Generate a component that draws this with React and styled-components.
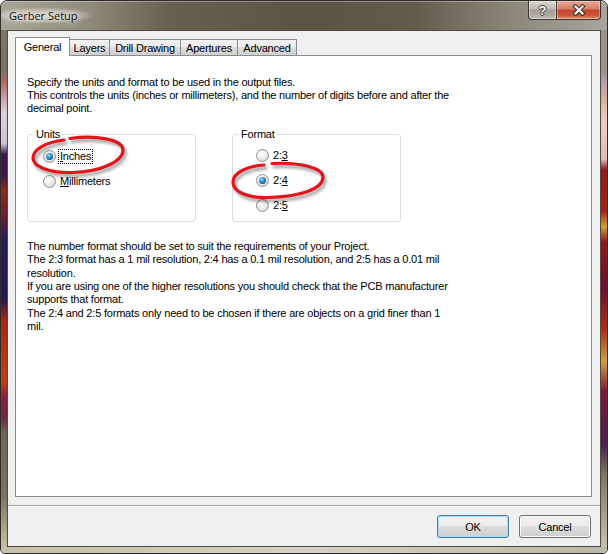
import React from 'react';
import styled, { createGlobalStyle, css } from 'styled-components';

const GlobalStyle = createGlobalStyle`
  html, body {
    margin: 0;
    padding: 0;
    background: #fff;
  }
  body {
    font-family: "Liberation Sans", Arial, sans-serif;
  }
`;

const leftGlass = `linear-gradient(180deg,
  #7b7566 0%, #7b7363 8%, #b36a66 10%, #c89aa4 13%, #dcd2e2 16%, #cfc0d6 22%,
  #3a1a4a 24%, #3a1848 28%, #8a2a1c 31%, #6a2030 36%, #2c1c5c 40%, #261850 52%,
  #a02a14 56%, #b84018 68%, #8a2040 71%, #6a2a40 75%, #6e6755 78%, #7a735f 90%, #c6bfa6 100%)`;

const rightGlass = `linear-gradient(180deg,
  #9a958b 0%, #9a958b 8%, #b89aa8 10%, #d8b8a0 14%, #ecd0c8 18%, #e2b8b4 25%,
  #8c1a1a 27%, #a02414 35%, #d0a030 38%, #8c1a1a 41%, #6a1030 50%, #a83018 58%,
  #d0a040 64%, #7a1838 70%, #4a2050 80%, #7b7563 86%, #c7c1ae 100%)`;

const Window = styled.div`
  position: relative;
  width: 608px;
  height: 554px;
  box-sizing: border-box;
  border: 1px solid #2f2d29;
  border-radius: 7px 7px 5px 5px;
  overflow: hidden;
  display: flex;
  flex-direction: column;
  background: #c8c2ae;
`;

const TitleBar = styled.div`
  height: 29px;
  flex: none;
  display: flex;
  align-items: flex-start;
  background: linear-gradient(90deg, #a9a497 0%, #928c7e 14%, #675f4f 28%, #5b5343 50%, #625b4c 68%, #8f897d 85%, #aaa59c 100%);
  box-shadow: inset 0 1px 0 rgba(255, 255, 255, 0.35);
`;

const Title = styled.div`
  margin-top: 7px;
  padding: 0 14px 0 8px;
  line-height: 15px;
  font-family: "Open Sans", "Noto Sans", sans-serif;
  font-size: 11px;
  color: #141414;
  background: radial-gradient(ellipse at 45% 50%, rgba(235, 232, 225, 0.75) 0%, rgba(235, 232, 225, 0.35) 55%, rgba(235, 232, 225, 0) 75%);
  text-shadow: 0 0 6px #fff, 0 0 10px rgba(255, 255, 255, 0.8);
`;

const CaptionButtons = styled.div`
  display: flex;
  margin-left: auto;
  margin-right: 6px;
`;

const CaptionButton = styled.div`
  height: 19px;
  box-sizing: border-box;
  display: flex;
  align-items: center;
  justify-content: center;
  border: 1px solid rgba(38, 34, 28, 0.85);
  border-top: none;
  box-shadow: inset 0 0 0 1px rgba(255, 255, 255, 0.35);
  ${p => p.$close ? css`
    width: 44px;
    border-left: none;
    border-radius: 0 0 4px 0;
    background: linear-gradient(180deg, #e9a695 0%, #d77d68 45%, #c3452d 50%, #cc5538 80%, #e39676 100%);
  ` : css`
    width: 29px;
    border-radius: 0 0 0 4px;
    background: linear-gradient(180deg, #dcd9d3 0%, #bdb9b1 45%, #a39e94 50%, #b3aea4 85%, #c9c5bd 100%);
  `}
`;

const HelpGlyph = styled.span`
  font-family: "Liberation Sans", Arial, sans-serif;
  font-weight: bold;
  font-size: 13px;
  line-height: 13px;
  color: #fff;
  text-shadow: 1px 0 0 #3a3a3a, -1px 0 0 #3a3a3a, 0 1px 0 #3a3a3a, 0 -1px 0 #3a3a3a;
`;

const Body = styled.div`
  flex: 1;
  display: flex;
  min-height: 0;
`;

const Side = styled.div`
  width: 6px;
  flex: none;
  background: ${p => p.$bg};
`;

const BottomEdge = styled.div`
  height: 6px;
  flex: none;
  background: linear-gradient(90deg, #c7c0a6 0%, #d6d1c2 50%, #bdb7a5 100%);
`;

const Client = styled.div`
  flex: 1;
  display: flex;
  flex-direction: column;
  background: #f0f0f0;
  border: 1px solid #4f4b43;
`;

const TabStrip = styled.div`
  display: flex;
  align-items: flex-end;
  height: 18px;
  padding: 6px 0 0 7px;
`;

const Tab = styled.div`
  position: relative;
  box-sizing: border-box;
  width: ${p => p.$width}px;
  height: ${p => (p.$active ? 19 : 16)}px;
  margin-bottom: ${p => (p.$active ? -1 : 0)}px;
  margin-left: -1px;
  z-index: ${p => (p.$active ? 1 : 0)};
  display: flex;
  align-items: center;
  justify-content: center;
  border: 1px solid #898c95;
  border-bottom: none;
  font-size: 11px;
  letter-spacing: -0.2px;
  color: #000;
  background: ${p => (p.$active ? '#fff' : 'linear-gradient(180deg, #f2f2f2 0%, #ebebeb 50%, #dddddd 50%, #cfcfcf 100%)')};
  padding-bottom: ${p => (p.$active ? 1 : 0)}px;

  &:first-child {
    margin-left: 0;
  }
`;

const Panel = styled.div`
  height: 442px;
  box-sizing: border-box;
  margin: 0 8px 0 7px;
  padding: 19.5px 0 0 11px;
  border: 1px solid #898c95;
  background: #fff;
`;

const Text = styled.div`
  font-size: 11px;
  letter-spacing: -0.2px;
  line-height: 13.4px;
  white-space: nowrap;
  color: #000;
  margin-top: ${p => p.$top || 0}px;
`;

const GroupRow = styled.div`
  display: flex;
  gap: 36px;
  margin-top: 18.5px;
`;

const GroupBox = styled.div`
  position: relative;
  width: 169px;
  height: 88px;
  box-sizing: border-box;
  border: 1px solid #d5dfe5;
  border-radius: 3px;
  padding: ${p => p.$padTop}px 0 0 ${p => p.$padLeft}px;
`;

const Legend = styled.span`
  position: absolute;
  top: -7px;
  left: 6px;
  padding: 0 2px;
  background: #fff;
  font-size: 11px;
  letter-spacing: -0.2px;
  line-height: 13px;
  color: #000;
`;

const RadioRow = styled.div`
  display: flex;
  align-items: center;
  gap: 2px;
  height: 25px;
`;

const Radio = styled.span`
  position: relative;
  flex: none;
  width: 13px;
  height: 13px;
  box-sizing: border-box;
  border-radius: 50%;
  border: 1px solid #8e8f8f;
  background: radial-gradient(circle at 40% 35%, #ffffff 0%, #f0f0f0 40%, #d0d0d0 100%);

  ${p => p.$checked && css`
    &::after {
      content: '';
      position: absolute;
      inset: 2px;
      border-radius: 50%;
      background: radial-gradient(circle at 40% 35%, #9adcfc 0%, #2f8fd8 40%, #10508f 80%, #0a3a6a 100%);
    }
  `}
`;

const RadioLabel = styled.span`
  font-size: 11px;
  letter-spacing: -0.2px;
  line-height: 13px;
  padding: 0 1px;
  color: #000;
  border: 1px ${p => (p.$focus ? 'dotted #000' : 'solid transparent')};
`;

const Footer = styled.div`
  flex: 1;
  display: flex;
  justify-content: flex-end;
  align-items: flex-start;
  gap: 10px;
  margin-top: 8px;
  padding: 9px 9px 0 0;
  border-top: 1px solid #a0a0a0;
  box-shadow: inset 0 1px 0 #fff;
`;

const DialogButton = styled.div`
  width: 72px;
  height: 23px;
  box-sizing: border-box;
  display: flex;
  align-items: center;
  justify-content: center;
  border-radius: 3px;
  font-size: 11px;
  letter-spacing: -0.2px;
  color: #000;
  background: linear-gradient(180deg, #f2f2f2 0%, #ebebeb 50%, #dddddd 50%, #cfcfcf 100%);
  ${p => p.$default ? css`
    border: 1px solid #3c7fb1;
    box-shadow: inset 0 0 0 1px #a9dcf6;
  ` : css`
    border: 1px solid #707070;
    box-shadow: inset 0 0 0 1px #fbfbfb;
  `}
`;

const Annotations = styled.svg`
  position: absolute;
  top: -1px;
  left: -1px;
  width: 608px;
  height: 554px;
  pointer-events: none;
`;

const CloseIcon = () => (
  <svg width="14" height="12" viewBox="0 0 14 12">
    <g strokeLinecap="square">
      <path d="M3.5 2.5 L10.5 9.5 M10.5 2.5 L3.5 9.5" stroke="#3a3633" strokeWidth="4.4" />
      <path d="M3.5 2.5 L10.5 9.5 M10.5 2.5 L3.5 9.5" stroke="#ffffff" strokeWidth="2.2" />
    </g>
  </svg>
);

// hand-drawn highlight rings, page coordinates
const rings = [
  'M70 138.5 C95 135 123 139 123 150 C123 162 100 172 72 172.5 C48 173 33 166 33 158 C33 149 47 142 64 140',
  'M272 163.5 C300 162 323 168 323 177 C323 189 300 197 268 197.5 C245 198 233 191 233 182 C233 173 247 166 264 165',
];

const tabs = [
  { label: 'General', width: 55 },
  { label: 'Layers', width: 41 },
  { label: 'Drill Drawing', width: 72 },
  { label: 'Apertures', width: 58 },
  { label: 'Advanced', width: 60 },
];

const formats = [
  { lead: '2:', key: '3' },
  { lead: '2:', key: '4', checked: true },
  { lead: '2:', key: '5' },
];

export default function App() {
  return (
    <>
      <GlobalStyle />
      <Window>
        <TitleBar>
          <Title>Gerber Setup</Title>
          <CaptionButtons>
            <CaptionButton><HelpGlyph>?</HelpGlyph></CaptionButton>
            <CaptionButton $close><CloseIcon /></CaptionButton>
          </CaptionButtons>
        </TitleBar>
        <Body>
          <Side $bg={leftGlass} />
          <Client>
            <TabStrip>
              {tabs.map((t, i) => (
                <Tab key={t.label} $width={t.width} $active={i === 0}>{t.label}</Tab>
              ))}
            </TabStrip>
            <Panel>
              <Text>
                Specify the units and format to be used in the output files.<br />
                This controls the units (inches or millimeters), and the number of digits before and after the<br />
                decimal point.
              </Text>
              <GroupRow>
                <GroupBox $padTop={9} $padLeft={15}>
                  <Legend>Units</Legend>
                  <RadioRow>
                    <Radio $checked />
                    <RadioLabel $focus><u>I</u>nches</RadioLabel>
                  </RadioRow>
                  <RadioRow>
                    <Radio />
                    <RadioLabel><u>M</u>illimeters</RadioLabel>
                  </RadioRow>
                </GroupBox>
                <GroupBox $padTop={8} $padLeft={23}>
                  <Legend>Format</Legend>
                  {formats.map(f => (
                    <RadioRow key={f.key}>
                      <Radio $checked={f.checked} />
                      <RadioLabel>{f.lead}<u>{f.key}</u></RadioLabel>
                    </RadioRow>
                  ))}
                </GroupBox>
              </GroupRow>
              <Text $top={17.5}>
                The number format should be set to suit the requirements of your Project.<br />
                The 2:3 format has a 1 mil resolution, 2:4 has a 0.1 mil resolution, and 2:5 has a 0.01 mil<br />
                resolution.<br />
                If you are using one of the higher resolutions you should check that the PCB manufacturer<br />
                supports that format.<br />
                The 2:4 and 2:5 formats only need to be chosen if there are objects on a grid finer than 1<br />
                mil.
              </Text>
            </Panel>
            <Footer>
              <DialogButton $default>OK</DialogButton>
              <DialogButton>Cancel</DialogButton>
            </Footer>
          </Client>
          <Side $bg={rightGlass} />
        </Body>
        <BottomEdge />
        <Annotations viewBox="0 0 608 554">
          <defs>
            <filter id="ringShadow" x="-20%" y="-40%" width="140%" height="180%">
              <feGaussianBlur stdDeviation="1.6" />
            </filter>
          </defs>
          {rings.map(d => (
            <g key={d} fill="none" strokeLinecap="round">
              <path d={d} transform="translate(2 3)" stroke="rgba(0,0,0,0.35)" strokeWidth="3.5" filter="url(#ringShadow)" />
              <path d={d} stroke="#e3151a" strokeWidth="3.2" />
            </g>
          ))}
        </Annotations>
      </Window>
    </>
  );
}
